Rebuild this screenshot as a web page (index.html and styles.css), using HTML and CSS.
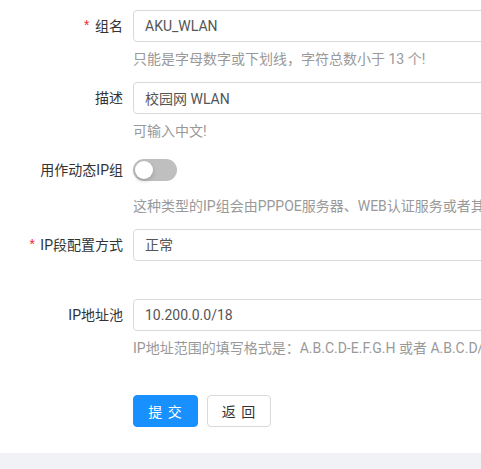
FILE: index.html
```html
<!DOCTYPE html>
<html lang="zh-CN">
<head>
    <meta charset="UTF-8">
    <meta name="viewport" content="width=device-width, initial-scale=1.0">
    <title>IP组编辑</title>
    <link rel="stylesheet" href="styles.css">
</head>
<body>
    <div class="page">
        <form class="form">
            <div class="form-item">
                <label class="form-label"><span class="required">*</span>组名</label>
                <div class="form-control">
                    <input class="input" type="text" value="AKU_WLAN">
                    <div class="help">只能是字母数字或下划线，字符总数小于 13 个!</div>
                </div>
            </div>
            <div class="form-item">
                <label class="form-label">描述</label>
                <div class="form-control">
                    <input class="input" type="text" value="校园网 WLAN">
                    <div class="help">可输入中文!</div>
                </div>
            </div>
            <div class="form-item">
                <label class="form-label">用作动态IP组</label>
                <div class="form-control">
                    <div class="switch-row"><span class="switch"><span class="knob"></span></span></div>
                    <div class="help help-switch">这种类型的IP组会由PPPOE服务器、WEB认证服务或者其它服务动态分配使用</div>
                </div>
            </div>
            <div class="form-item item-gap">
                <label class="form-label"><span class="required">*</span>IP段配置方式</label>
                <div class="form-control">
                    <div class="input select">正常</div>
                </div>
            </div>
            <div class="form-item">
                <label class="form-label">IP地址池</label>
                <div class="form-control">
                    <input class="input" type="text" value="10.200.0.0/18">
                    <div class="help">IP地址范围的填写格式是：A.B.C.D-E.F.G.H 或者 A.B.C.D/M</div>
                </div>
            </div>
            <div class="actions">
                <button type="button" class="btn btn-primary">提 交</button>
                <button type="button" class="btn">返 回</button>
            </div>
        </form>
    </div>
    <div class="footer"></div>
</body>
</html>
```

FILE: styles.css
```css
html, body {
    margin: 0;
    padding: 0;
    overflow: hidden;
}
body {
    font-family: Roboto, "Noto Sans CJK SC", sans-serif;
    font-size: 14px;
    color: #333;
    background-color: #fff;
    width: 481px;
    height: 469px;
}
.page {
    height: 453px;
    padding-top: 10px;
    box-sizing: border-box;
}
.form {
    width: 760px;
}
.form-item {
    display: flex;
    margin-bottom: 13px;
}
.item-gap {
    margin-bottom: 37px;
}
.form-label {
    width: 123px;
    flex-shrink: 0;
    box-sizing: border-box;
    text-align: right;
    line-height: 32px;
    color: #333;
    white-space: nowrap;
}
.required {
    color: #f5222d;
    margin-right: 4px;
    font-family: SimSun, "Liberation Mono", monospace;
}
.form-control {
    flex: 1;
    padding-left: 10px;
}
.input {
    display: block;
    width: 100%;
    height: 32px;
    box-sizing: border-box;
    padding: 0 11px;
    border: 1px solid #d9d9d9;
    border-radius: 4px;
    font-family: inherit;
    font-size: 14px;
    color: #555;
    line-height: 30px;
    outline: none;
}
.help {
    margin-top: 7px;
    line-height: 20px;
    color: #999;
    white-space: nowrap;
}
.help-switch {
    margin-top: 10px;
}
.switch-row {
    height: 32px;
    display: flex;
    align-items: center;
}
.switch {
    position: relative;
    display: inline-block;
    width: 44px;
    height: 22px;
    border-radius: 11px;
    background-color: #bfbfbf;
}
.knob {
    position: absolute;
    top: 2px;
    left: 2px;
    width: 18px;
    height: 18px;
    border-radius: 50%;
    background-color: #fff;
    box-shadow: 0 2px 4px rgba(0, 35, 11, 0.2);
}
.actions {
    display: flex;
    gap: 9px;
    padding-left: 133px;
    margin-top: 37px;
}
.btn {
    height: 32px;
    width: 64px;
    padding: 0;
    border: 1px solid #d9d9d9;
    border-radius: 4px;
    background-color: #fff;
    font-family: inherit;
    font-size: 14px;
    letter-spacing: 1px;
    color: #333;
    cursor: pointer;
}
.btn-primary {
    width: 65px;
    background-color: #1890ff;
    border-color: #1890ff;
    color: #fff;
}
.footer {
    height: 16px;
    background-color: #f0f2f5;
}
```
